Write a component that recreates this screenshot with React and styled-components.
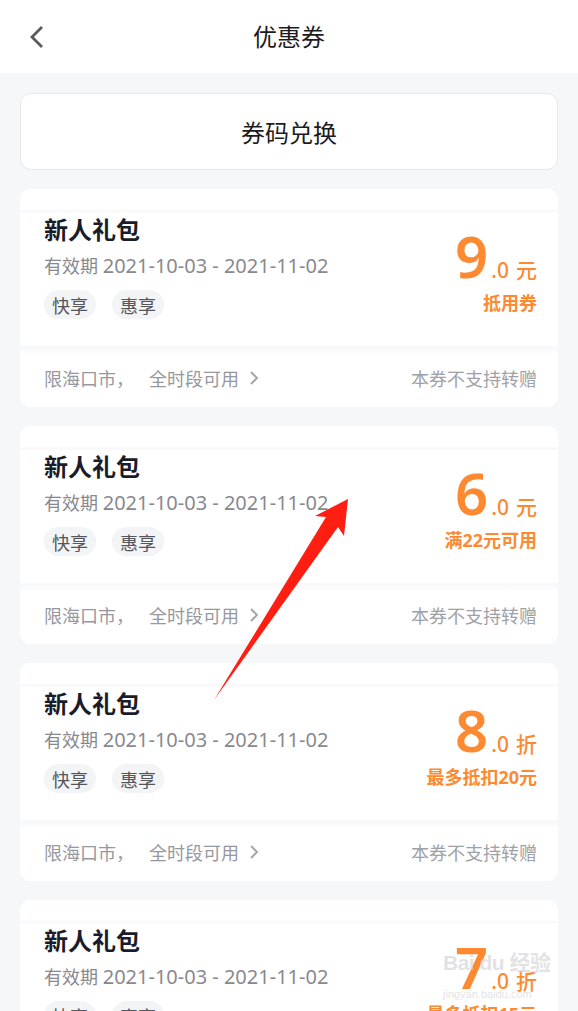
import React from "react";
import styled, { createGlobalStyle } from "styled-components";

const Global = createGlobalStyle`
  html, body { margin: 0; padding: 0; background: #f6f7f9; }
  body { font-family: "Noto Sans", "Noto Sans CJK SC", sans-serif; overflow: hidden; }
  * { box-sizing: border-box; }
`;

const Page = styled.div`
  position: relative;
  width: 578px;
  min-height: 1011px;
  background: #f6f7f9;
`;

const Header = styled.header`
  height: 73px;
  background: #fff;
  display: grid;
  grid-template-columns: 1fr auto 1fr;
  align-items: center;
  padding: 0 27px;
`;

const Back = styled.div`
  display: flex;
  align-items: center;
  height: 24px;
`;

const Title = styled.h1`
  margin: 0;
  font-size: 24px;
  font-weight: 400;
  color: #1c1c1e;
  line-height: 30px;
`;

const Content = styled.main`
  padding: 20px 20px 0;
  display: flex;
  flex-direction: column;
  gap: 19px;
`;

const Exchange = styled.div`
  height: 77px;
  background: #fff;
  border: 1px solid #e7e8ea;
  border-radius: 11px;
  display: flex;
  align-items: center;
  justify-content: center;
  font-size: 24px;
  color: #1c1c1e;
`;

const Card = styled.section`
  height: 218px;
  background: #fff;
  border-radius: 11px;
  overflow: hidden;
  display: flex;
  flex-direction: column;
`;

const TopStrip = styled.div`
  height: 24px;
  flex: none;
  background: linear-gradient(to bottom, #fff 0, #fff 20px, #f7f8fa 22px, #fbfbfc 24px);
`;

const Main = styled.div`
  height: 133px;
  flex: none;
  display: flex;
  justify-content: space-between;
  padding: 2px 21px 0 24px;
`;

const Left = styled.div`
  display: flex;
  flex-direction: column;
`;

const Name = styled.div`
  font-size: 24px;
  line-height: 30px;
  font-weight: 700;
  color: #1a1c29;
`;

const Dates = styled.div`
  margin-top: 8px;
  font-size: 18px;
  line-height: 26px;
  color: #88898f;
  white-space: nowrap;
`;

const Num = styled.span`
  font-size: 20px;
`;

const Tags = styled.div`
  margin-top: 11px;
  display: flex;
  gap: 16px;
`;

const Tag = styled.span`
  height: 29px;
  padding: 0 8px;
  border-radius: 15px;
  background: #f3f4f6;
  color: #55565c;
  font-size: 18px;
  display: flex;
  align-items: center;
`;

const Right = styled.div`
  display: flex;
  flex-direction: column;
  align-items: flex-end;
  padding-top: 12px;
`;

const Amount = styled.div`
  display: flex;
  align-items: baseline;
  color: #fd8a30;
  line-height: 1;
`;

const Big = styled.span`
  font-size: 58px;
  font-weight: 600;
  line-height: 58px;
  letter-spacing: -1px;
`;

const Small = styled.span`
  font-size: 21px;
  font-weight: 500;
  margin-left: 4px;
  & + & { margin-left: 7px; }
`;

const Cond = styled.div`
  margin-top: 6px;
  font-size: 18px;
  font-weight: 700;
  color: #fd8a30;
  line-height: 24px;
`;

const Footer = styled.div`
  flex: 1;
  display: flex;
  align-items: center;
  justify-content: space-between;
  padding: 2px 21px 0 24px;
  background: linear-gradient(to bottom, #f7f8fa 0, #fbfbfc 5px, #fff 9px);
  font-size: 18px;
  color: #97989e;
`;

const Limit = styled.div`
  display: flex;
  align-items: center;
  gap: 15px;
`;

const Avail = styled.span`
  display: flex;
  align-items: center;
  gap: 8px;
`;

const Note = styled.span`
  color: #a0a1a6;
`;

const ArrowOverlay = styled.svg`
  position: absolute;
  left: 0;
  top: 0;
  pointer-events: none;
`;

const Watermark = styled.div`
  position: absolute;
  left: 443px;
  top: 952px;
  color: rgba(214, 214, 218, 0.7);
  font-family: "Liberation Sans", "Noto Sans CJK SC", sans-serif;
  pointer-events: none;
  line-height: 1;
  white-space: nowrap;
`;

const WmTop = styled.div`
  font-size: 21px;
  font-weight: 700;
  letter-spacing: -0.5px;
`;

const WmBottom = styled.div`
  font-size: 11px;
  margin-top: 16px;
`;

const coupons = [
  { big: "9", unit: "元", cond: "抵用券" },
  { big: "6", unit: "元", cond: "满22元可用" },
  { big: "8", unit: "折", cond: "最多抵扣20元" },
  { big: "7", unit: "折", cond: "最多抵扣15元" },
];

function Chevron() {
  return (
    <svg width="12" height="16" viewBox="0 0 12 16" fill="none">
      <path d="M4 2 L10 8 L4 14" stroke="#a6a7ac" strokeWidth="2" />
    </svg>
  );
}

function Coupon({ big, unit, cond }) {
  return (
    <Card>
      <TopStrip />
      <Main>
        <Left>
          <Name>新人礼包</Name>
          <Dates>
            有效期 <Num>2021-10-03 - 2021-11-02</Num>
          </Dates>
          <Tags>
            <Tag>快享</Tag>
            <Tag>惠享</Tag>
          </Tags>
        </Left>
        <Right>
          <Amount>
            <Big>{big}</Big>
            <Small>.0</Small>
            <Small>{unit}</Small>
          </Amount>
          <Cond>{cond}</Cond>
        </Right>
      </Main>
      <Footer>
        <Limit>
          <span>限海口市，</span>
          <Avail>
            全时段可用
            <Chevron />
          </Avail>
        </Limit>
        <Note>本券不支持转赠</Note>
      </Footer>
    </Card>
  );
}

export default function App() {
  return (
    <Page>
      <Global />
      <Header>
        <Back>
          <svg width="18" height="24" viewBox="0 0 18 24" fill="none">
            <path d="M15 2 L5 12 L15 22" stroke="#5a5a5c" strokeWidth="2.8" />
          </svg>
        </Back>
        <Title>优惠券</Title>
        <span />
      </Header>
      <Content>
        <Exchange>券码兑换</Exchange>
        {coupons.map((c, i) => (
          <Coupon key={i} {...c} />
        ))}
      </Content>
      <Watermark>
        <WmTop>Bai du 经验</WmTop>
        <WmBottom>jingyan.baidu.com</WmBottom>
      </Watermark>
      <ArrowOverlay width="578" height="1011" viewBox="0 0 578 1011">
        <polygon
          points="214,700 326,517 315,516 348,499 344,536 338,527"
          fill="#ff1e12"
        />
      </ArrowOverlay>
    </Page>
  );
}
